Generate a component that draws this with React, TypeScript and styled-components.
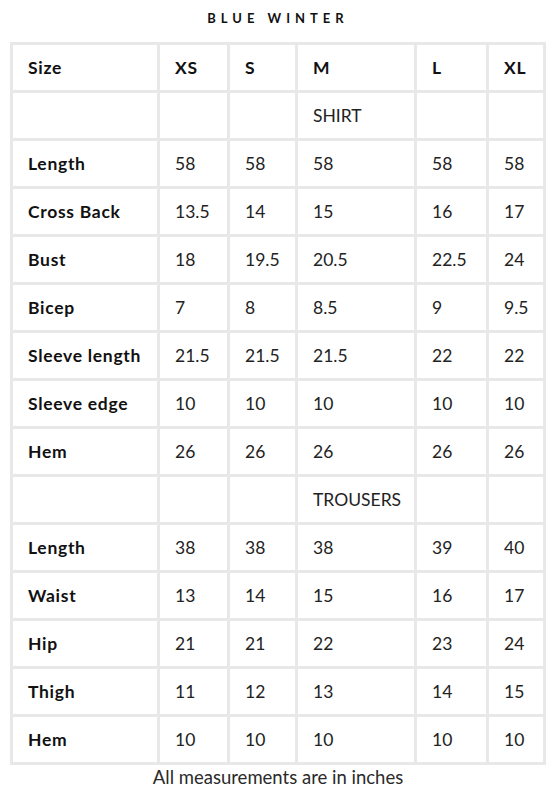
import React from "react";
import styled, {createGlobalStyle} from "styled-components";

const GlobalStyle = createGlobalStyle`
  body {
    margin: 0;
    background: #FFFFFF;
    font-family: Lato, "Noto Sans", sans-serif;
    color: #1a1a1a;
  }
`;

const Page = styled.div`
  width: 554px;
  padding: 0 8px 0 10px;
  box-sizing: border-box;
`;
const Title = styled.h2`
  margin: 0;
  height: 42px;
  padding-top: 10px;
  box-sizing: border-box;

  text-align: center;
  font-size: 13px;
  font-weight: 700;
  letter-spacing: 5px;
  color: #111;
`;
const Table = styled.table`
  width: 536px;
  border-collapse: collapse;
  table-layout: fixed;
  border: 3px solid #e8e8e8;
`;
const Cell = styled.td<{ $bold?: boolean }>`
  height: 48px;
  padding: 0 0 0 15px;
  box-sizing: border-box;

  border: 3px solid #e8e8e8;
  font-size: 17.5px;
  font-weight: ${p => (p.$bold ? 700 : 400)};
  letter-spacing: ${p => (p.$bold ? '0.7px' : '0')};
  color: ${p => (p.$bold ? '#111' : '#222')};
  white-space: nowrap;
`;
const Note = styled.p`
  margin: 0;
  padding-top: 1px;

  text-align: center;
  font-size: 18.5px;
  color: #2a2a2a;
`;

const widths = [147, 70, 68, 119, 72, 57];
const sizes = ['XS', 'S', 'M', 'L', 'XL'];

type Row = { label: string; values: string[] } | { section: string };

const rows: Row[] = [
  {section: 'SHIRT'},
  {label: 'Length', values: ['58', '58', '58', '58', '58']},
  {label: 'Cross Back', values: ['13.5', '14', '15', '16', '17']},
  {label: 'Bust', values: ['18', '19.5', '20.5', '22.5', '24']},
  {label: 'Bicep', values: ['7', '8', '8.5', '9', '9.5']},
  {label: 'Sleeve length', values: ['21.5', '21.5', '21.5', '22', '22']},
  {label: 'Sleeve edge', values: ['10', '10', '10', '10', '10']},
  {label: 'Hem', values: ['26', '26', '26', '26', '26']},
  {section: 'TROUSERS'},
  {label: 'Length', values: ['38', '38', '38', '39', '40']},
  {label: 'Waist', values: ['13', '14', '15', '16', '17']},
  {label: 'Hip', values: ['21', '21', '22', '23', '24']},
  {label: 'Thigh', values: ['11', '12', '13', '14', '15']},
  {label: 'Hem', values: ['10', '10', '10', '10', '10']},
];

export default function App() {
  return (
    <Page>
      <GlobalStyle/>
      <Title>BLUE WINTER</Title>
      <Table>
        <colgroup>
          {widths.map((w, i) => <col key={i} style={{width: w}}/>)}
        </colgroup>
        <tbody>
          <tr>
            <Cell $bold>Size</Cell>
            {sizes.map(s => <Cell key={s} $bold>{s}</Cell>)}
          </tr>
          {rows.map((row, i) => 'section' in row ? (
            <tr key={i}>
              <Cell/><Cell/><Cell/>
              <Cell>{row.section}</Cell>
              <Cell/><Cell/>
            </tr>
          ) : (
            <tr key={i}>
              <Cell $bold>{row.label}</Cell>
              {row.values.map((v, j) => <Cell key={j}>{v}</Cell>)}
            </tr>
          ))}
        </tbody>
      </Table>
      <Note>All measurements are in inches</Note>
    </Page>
  );
}
